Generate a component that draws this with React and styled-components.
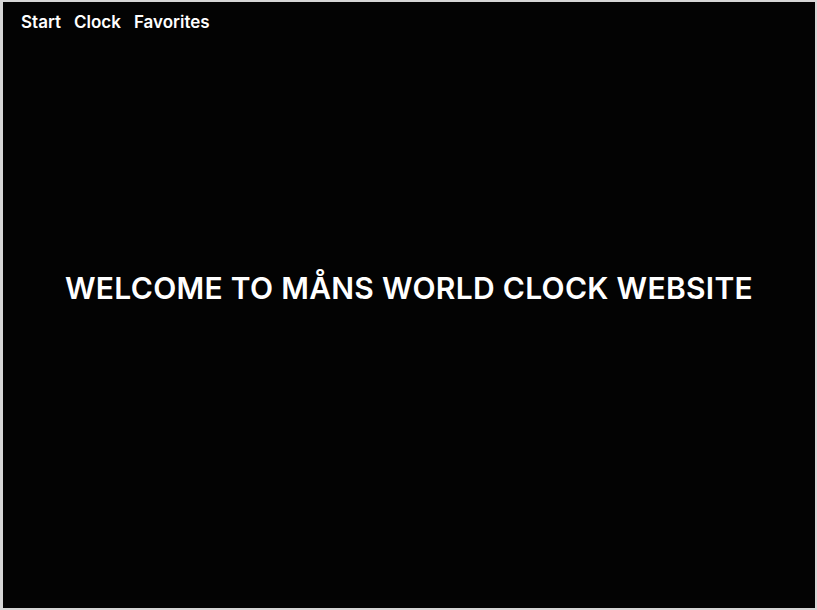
import styled, { createGlobalStyle } from "styled-components"

const GlobalStyle = createGlobalStyle`
  html, body {
    margin: 0;
    background: #d6d6d6;
  }
  body {
    font-family: Inter, "Noto Sans", sans-serif;
  }
`

const Page = styled.div`
  margin: 2px 2px 2px 3px;
  height: 606px;
  background: #030303;
  color: #fff;
  display: flex;
  flex-direction: column;
`

const Nav = styled.nav`
  display: flex;
  gap: 13px;
  padding: 10px 18px;
`

const NavLink = styled.a`
  font-size: 17px;
  font-weight: 600;
  color: #fff;
  text-decoration: none;
  cursor: pointer;
`

const Main = styled.main`
  flex: 1;
  display: flex;
  align-items: center;
  justify-content: center;
  padding-bottom: 74px;
`

const Title = styled.h1`
  margin: 0;
  font-size: 30px;
  font-weight: 600;
  letter-spacing: 0.3px;
`

const App = () => {
  return (
    <>
      <GlobalStyle />
      <Page>
        <Nav>
          <NavLink>Start</NavLink>
          <NavLink>Clock</NavLink>
          <NavLink>Favorites</NavLink>
        </Nav>
        <Main>
          <Title>WELCOME TO MÅNS WORLD CLOCK WEBSITE</Title>
        </Main>
      </Page>
    </>
  )
}

export default App
